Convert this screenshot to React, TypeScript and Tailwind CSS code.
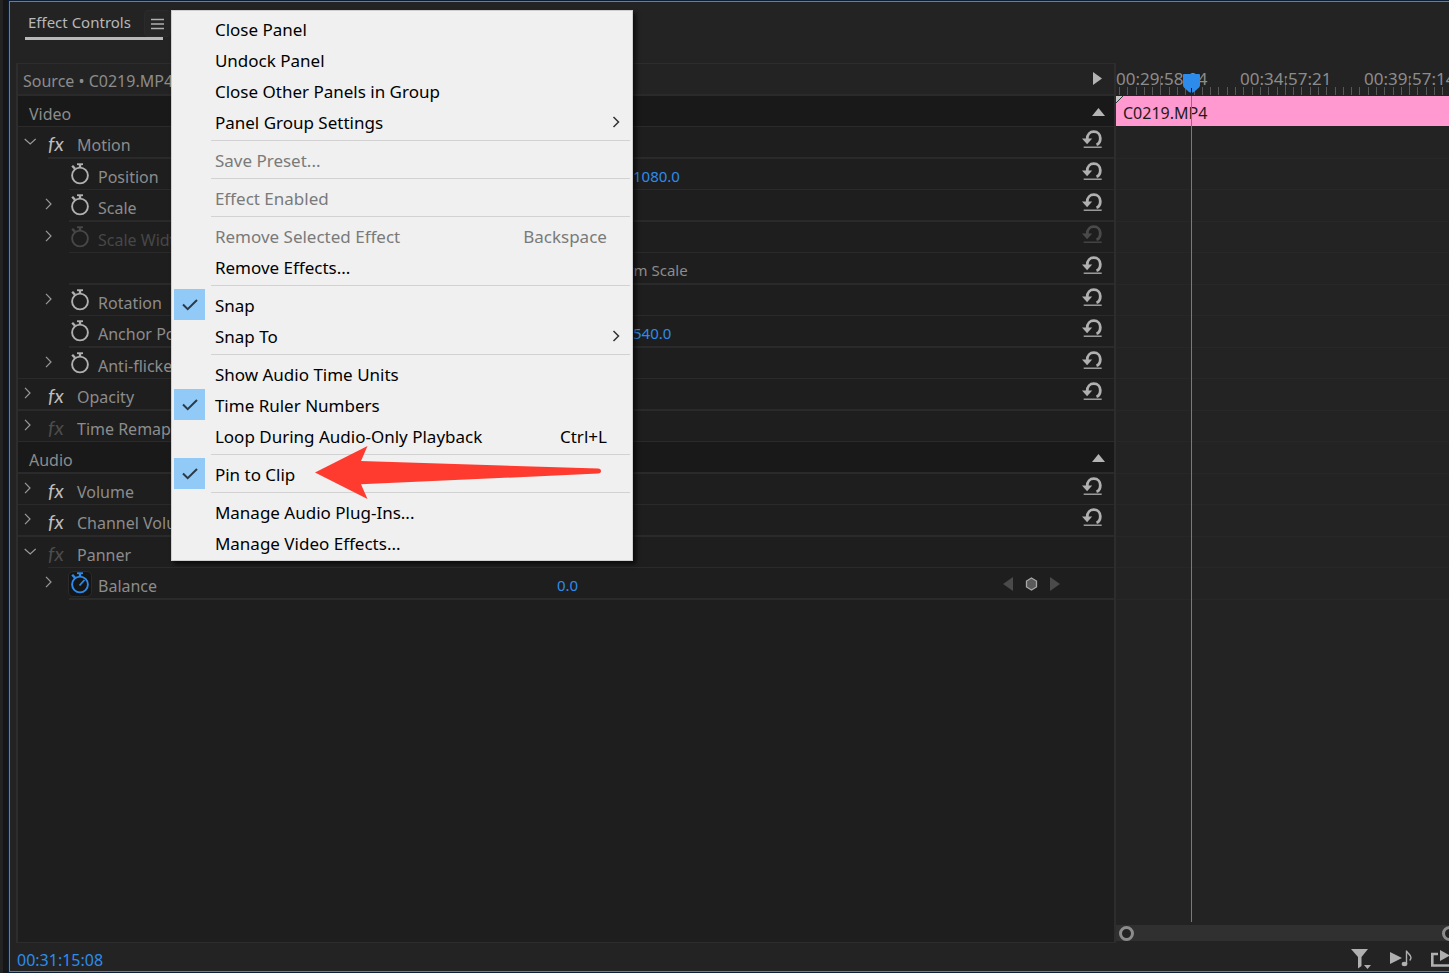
import type { ReactNode } from 'react';

type Row = {
  kind: 'section' | 'effect' | 'property';
  name: string;
  arrow?: 'right' | 'down';
  inset?: boolean;
  dim?: boolean;
  active?: boolean;
  noWatch?: boolean;
  value?: ReactNode;
  action?: 'reset' | 'reset-dim' | 'keys';
};

const rows: Row[] = [
  { kind: 'section', name: 'Video' },
  { kind: 'effect', name: 'Motion', arrow: 'down', inset: true, action: 'reset' },
  {
    kind: 'property',
    name: 'Position',
    inset: true,
    action: 'reset',
    value: <button className="ml-[76px] text-[#2d8ceb]">1080.0</button>
  },
  { kind: 'property', name: 'Scale', arrow: 'right', inset: true, action: 'reset' },
  { kind: 'property', name: 'Scale Width', arrow: 'right', inset: true, dim: true, action: 'reset-dim' },
  {
    kind: 'property',
    name: '',
    inset: true,
    noWatch: true,
    action: 'reset',
    value: <span className="ml-8">Uniform Scale</span>
  },
  { kind: 'property', name: 'Rotation', arrow: 'right', inset: true, action: 'reset' },
  {
    kind: 'property',
    name: 'Anchor Point',
    inset: true,
    action: 'reset',
    value: <button className="ml-[76px] text-[#2d8ceb]">540.0</button>
  },
  { kind: 'property', name: 'Anti-flicker Filter', arrow: 'right', action: 'reset' },
  { kind: 'effect', name: 'Opacity', arrow: 'right', action: 'reset' },
  { kind: 'effect', name: 'Time Remapping', arrow: 'right', dim: true },
  { kind: 'section', name: 'Audio' },
  { kind: 'effect', name: 'Volume', arrow: 'right', action: 'reset' },
  { kind: 'effect', name: 'Channel Volume', arrow: 'right', action: 'reset' },
  { kind: 'effect', name: 'Panner', arrow: 'down', inset: true, dim: true },
  {
    kind: 'property',
    name: 'Balance',
    arrow: 'right',
    inset: true,
    active: true,
    action: 'keys',
    value: <button className="text-[#2d8ceb]">0.0</button>
  }
];

type MenuEntry = {
  label: string;
  shortcut?: string;
  checked?: boolean;
  disabled?: boolean;
  submenu?: boolean;
};

const menuGroups: MenuEntry[][] = [
  [
    { label: 'Close Panel' },
    { label: 'Undock Panel' },
    { label: 'Close Other Panels in Group' },
    { label: 'Panel Group Settings', submenu: true }
  ],
  [{ label: 'Save Preset...', disabled: true }],
  [{ label: 'Effect Enabled', disabled: true }],
  [
    { label: 'Remove Selected Effect', shortcut: 'Backspace', disabled: true },
    { label: 'Remove Effects...' }
  ],
  [
    { label: 'Snap', checked: true },
    { label: 'Snap To', submenu: true }
  ],
  [
    { label: 'Show Audio Time Units' },
    { label: 'Time Ruler Numbers', checked: true },
    { label: 'Loop During Audio-Only Playback', shortcut: 'Ctrl+L' }
  ],
  [{ label: 'Pin to Clip', checked: true }],
  [{ label: 'Manage Audio Plug-Ins...' }, { label: 'Manage Video Effects...' }]
];

const timecodes = ['00:29:58:04', '00:34:57:21', '00:39:57:14'];

function Twirl({ direction }: { direction: 'right' | 'down' }) {
  return (
    <svg width="12" height="12" viewBox="0 0 12 12" fill="none" stroke="#9a9a9a" strokeWidth="1.2">
      {direction === 'right' ? <path d="M1 .8 6 6 1 11.2" /> : <path d="M.7 4 6.2 9 11.7 4" />}
    </svg>
  );
}

function Stopwatch({ active }: { active?: boolean }) {
  return (
    <svg width="22" height="24" viewBox="0 0 22 24" fill="none" stroke="currentColor">
      <circle cx="11" cy="12.5" r="7.9" strokeWidth="1.9" />
      <path d="M8 1.2h6" strokeWidth="1.8" />
      <path d="M11 1v4" strokeWidth="2.4" />
      <path d="M3.2 2.8 6 5.8" strokeWidth="2.4" />
      {active && <path d="M10.5 13.5 15.5 8" strokeWidth="1.8" />}
    </svg>
  );
}

function ResetIcon() {
  return (
    <svg width="20" height="19" viewBox="0 0 20 19">
      <path d="M0 8.4h10.2L5.1 14.2z" fill="currentColor" />
      <path
        d="M5.2 9C5.2 4.4 8 1.7 11.8 1.7c4 0 6.5 3 6.5 6.6 0 3-1.3 5.6-3.8 6.5"
        fill="none"
        stroke="currentColor"
        strokeWidth="2.8"
      />
      <path d="M1.7 17.2h18" stroke="currentColor" strokeWidth="1.3" />
    </svg>
  );
}

function KeyframeNav() {
  return (
    <div className="mr-[54px] flex items-center gap-3 pt-[9px]">
      <button aria-label="Previous keyframe">
        <svg width="10" height="14" viewBox="0 0 10 14">
          <path d="M10 0v14L0 7z" fill="#4a4a4a" />
        </svg>
      </button>
      <button aria-label="Add keyframe">
        <svg width="13" height="14" viewBox="0 0 13 14">
          <path d="M6.5 1 11.5 4v6l-5 3-5-3V4z" fill="#5a5a5a" stroke="#a8a8a8" strokeWidth="1.3" />
        </svg>
      </button>
      <button aria-label="Next keyframe">
        <svg width="10" height="14" viewBox="0 0 10 14">
          <path d="M0 0v14l10-7z" fill="#4a4a4a" />
        </svg>
      </button>
    </div>
  );
}

function EffectRow({ row, thick }: { row: Row; thick: boolean }) {
  const line = thick ? 'border-b-2 border-[#2a2a2a]' : 'border-b border-[#2a2a2a]';
  const height = thick ? 'h-8' : 'h-[31px]';

  if (row.kind === 'section') {
    return (
      <div className={`flex items-start bg-[#191919] ${height} ${line}`}>
        <span className="flex-1 pt-2 pl-[11px] text-base leading-5">{row.name}</span>
        <button className="mr-[9px] pt-3" aria-label={`Collapse ${row.name}`}>
          <svg width="13" height="8" viewBox="0 0 13 8">
            <path d="M6.5 0 13 8H0z" fill="#b4b4b4" />
          </svg>
        </button>
      </div>
    );
  }

  const isEffect = row.kind === 'effect';
  return (
    <div className={`flex ${height} ${row.inset ? '' : line}`}>
      <div className={`shrink-0 pt-2 ${isEffect ? 'w-[30px] pl-1.5' : 'w-[51px] pl-[27px]'}`}>
        {row.arrow && (
          <button className="block" aria-label={`Toggle ${row.name}`}>
            <Twirl direction={row.arrow} />
          </button>
        )}
      </div>
      <div className={`flex min-w-0 flex-1 items-start ${row.inset ? line : ''}`}>
        {isEffect ? (
          <div className="flex flex-1">
            <span
              className={`w-[29px] pt-1.5 font-[Lato,sans-serif] text-xl leading-5 italic ${
                row.dim ? 'text-[#4c4c4c]' : 'text-[#bdbdbd]'
              }`}
            >
              fx
            </span>
            <span className="pt-2 text-base leading-5">{row.name}</span>
          </div>
        ) : (
          <div className={`flex w-[488px] shrink-0 ${row.dim ? 'text-[#474747]' : ''}`}>
            {!row.noWatch && (
              <button
                aria-label={`Animate ${row.name}`}
                className={
                  row.active
                    ? 'mt-1 h-6 rounded-sm bg-[#151515] text-[#2d8ceb] outline outline-[#2a2a2a]'
                    : row.dim
                      ? 'mt-1 h-6'
                      : 'mt-1 h-6 text-[#b0b0b0]'
                }
              >
                <Stopwatch active={row.active} />
              </button>
            )}
            <span className="pt-2 pl-[7px] text-base leading-5">{row.name}</span>
          </div>
        )}
        {!isEffect && <div className="flex flex-1 pt-[7px] leading-5">{row.value}</div>}
        {row.action === 'keys' && <KeyframeNav />}
        {(row.action === 'reset' || row.action === 'reset-dim') && (
          <button
            aria-label={`Reset ${row.name}`}
            className={`mt-[3px] mr-3 ${row.action === 'reset' ? 'text-[#b0b0b0]' : 'text-[#4a4a4a]'}`}
          >
            <ResetIcon />
          </button>
        )}
      </div>
    </div>
  );
}

function PanelMenu() {
  return (
    <div
      role="menu"
      className="absolute top-0 left-full z-20 w-[462px] border border-[#cfcfcf] bg-[#f0f0f0] p-0.5 font-['Noto_Sans',sans-serif] text-[17px] text-black shadow-[3px_3px_4px_rgba(0,0,0,0.6)]"
    >
      {menuGroups.map((group, index) => (
        <div key={index}>
          {index > 0 && <div className="my-[3px] ml-[37px] h-px bg-[#d2d2d2]" />}
          {group.map((entry) => (
            <button
              key={entry.label}
              role={entry.checked ? 'menuitemcheckbox' : 'menuitem'}
              aria-checked={entry.checked}
              disabled={entry.disabled}
              className="flex h-[31px] w-full items-center text-left disabled:text-[#7a7a7a]"
            >
              <span
                className={`mr-2.5 flex h-[31px] w-[31px] items-center justify-center ${
                  entry.checked ? 'bg-[#91c9f7]' : ''
                }`}
              >
                {entry.checked && (
                  <svg width="17" height="12" viewBox="0 0 17 12" fill="none">
                    <path d="M2 5.5 6.7 10.2 16 1" stroke="#2b3a48" strokeWidth="2" />
                  </svg>
                )}
              </span>
              <span className="flex-1 pt-0.5">{entry.label}</span>
              {entry.shortcut && <span className="pt-0.5 pr-[23px]">{entry.shortcut}</span>}
              {entry.submenu && (
                <svg className="mr-2.5" width="8" height="12" viewBox="0 0 8 12" fill="none">
                  <path d="M1.5 1 6.5 6l-5 5" stroke="#333" strokeWidth="1.5" />
                </svg>
              )}
            </button>
          ))}
        </div>
      ))}
      {/* Arrow pointing at "Pin to Clip" */}
      <svg
        className="pointer-events-none absolute top-[435px] left-[142px]"
        width="288"
        height="54"
        viewBox="0 0 288 54"
      >
        <path
          d="M1 26.5 53.5 0 47 15 284 22.5q3 .2 3 2.5t-3 2.6L47 38.3 53.5 53z"
          fill="#ff3b30"
        />
      </svg>
    </div>
  );
}

function Timeline() {
  return (
    <div className="relative flex w-[333px] shrink-0 flex-col overflow-hidden">
      <div className="relative h-[33px] text-[17px] leading-5">
        <svg className="absolute inset-0" width="333" height="33">
          {Array.from({ length: 41 }, (_, i) => {
            const x = Math.round(3 + i * 8.29) + 0.5;
            return (
              <line key={i} x1={x} x2={x} y1={i % 15 === 5 ? 15 : 24} y2="32" stroke="#575757" />
            );
          })}
        </svg>
        <div className="relative flex pt-1.5">
          {timecodes.map((time) => (
            <span key={time} className="w-[124px] shrink-0">
              {time}
            </span>
          ))}
        </div>
      </div>
      <div className="relative h-[30px] bg-[#ff99cf] pt-[7px] pl-[7px] text-base leading-5 text-[#1c1c1c]">
        C0219.MP4
        <svg className="absolute top-0 left-0" width="7" height="7">
          <path d="M0 0h7L0 7z" fill="#c4c4c4" />
          <path d="M7 0 0 7" stroke="#333" />
        </svg>
      </div>
      <div className="mt-px flex-1">
        {rows.slice(1).map((row, index) => (
          <div
            key={index}
            className={
              index % 2 === 0 ? 'h-8 border-b border-[#272727]' : 'h-[31px] border-b border-[#272727]'
            }
          />
        ))}
      </div>
      <div className="mb-0.5 flex h-4 items-center justify-between bg-[#303030] pl-[3px]">
        <button className="size-[15px] rounded-full border-3 border-[#8c8c8c] bg-[#232323]" aria-label="Zoom start" />
        <button
          className="-mr-2 size-[15px] rounded-full border-3 border-[#8c8c8c] bg-[#232323]"
          aria-label="Zoom end"
        />
      </div>
      {/* Playhead */}
      <div className="absolute top-[11px] bottom-[21px] left-[66px] flex w-[19px] flex-col items-center">
        <svg className="shrink-0" width="19" height="19" viewBox="0 0 19 19">
          <path
            d="M2 0h15q1 0 1 1v10q0 1.5-1 2.5l-5 4.5q-2.5 1.5-5 0l-5-4.5q-1-1-1-2.5V1q0-1 1-1z"
            fill="#2d8ceb"
          />
          <path d="M9.5 14v5" stroke="#111" />
        </svg>
        <div className="mt-[3px] w-px flex-1 bg-[#2d8ceb]" />
      </div>
    </div>
  );
}

export default function App() {
  return (
    <div className="flex min-h-screen overflow-hidden bg-[#161616] font-['Noto_Sans',sans-serif] text-[15px] text-[#8c8c8c]">
      <div className="w-[3px] bg-[#232323]" />
      <main className="mt-px mb-px ml-1.5 flex min-w-0 flex-1 flex-col border-y border-l border-[#2d8ceb] bg-[#232323] outline outline-[#0b2038]">
        <header className="flex h-[61px] items-start pt-2 pl-[15px]">
          <div className="relative flex">
            <h1 className="h-[30px] pt-0.5 pr-[13px] pl-[3px] leading-5 text-[#b8b8b8]">Effect Controls</h1>
            <button
              className="h-[27px] rounded-sm border border-[#2a2a2a] bg-[#262626] px-1.5"
              aria-label="Panel menu"
            >
              <svg width="13" height="12" viewBox="0 0 13 12" stroke="#b0b0b0" strokeWidth="1.4">
                <path d="M0 1.5h13M0 6h13M0 10.5h13" />
              </svg>
            </button>
            <div className="absolute top-[27px] left-0 h-[3px] w-[138px] bg-[#b8b8b8]" />
            <PanelMenu />
          </div>
        </header>

        <div className="ml-1.5 flex flex-1">
          <section className="min-w-0 flex-1 border-t border-r-2 border-b border-l-2 border-[#2d2d2d] bg-[#1e1e1e]">
            <div className="flex h-8 items-start border-b-2 border-[#2a2a2a] bg-[#232323]">
              <span className="flex-1 pt-[7px] pl-[5px] text-base leading-5">Source • C0219.MP4</span>
              <button className="mr-3 pt-2" aria-label="Show timeline">
                <svg width="9" height="13" viewBox="0 0 9 13">
                  <path d="M0 0v13l9-6.5z" fill="#b4b4b4" />
                </svg>
              </button>
            </div>
            {rows.map((row, index) => (
              <EffectRow key={index} row={row} thick={index % 2 === 1} />
            ))}
          </section>
          <Timeline />
        </div>

        <footer className="flex h-7 items-center overflow-hidden pl-[7px]">
          <span className="flex-1 pt-1.5 text-base leading-5 text-[#2d8ceb]">00:31:15:08</span>
          <div className="flex shrink-0 items-center gap-[19px] pt-0.5 text-[#b0b0b0]">
            <button aria-label="Filter properties">
              <svg width="20" height="21" viewBox="0 0 20 21" fill="currentColor">
                <path d="M0 1h17l-6.500 8v9l-3.500 2.500V9zM13 17h7l-3.500 4z" />
              </svg>
            </button>
            <button aria-label="Play audio">
              <svg width="22" height="18" viewBox="0 0 22 18">
                <path d="M0 3v12l12-6z" fill="currentColor" />
                <ellipse cx="14.5" cy="15" rx="2.8" ry="2.2" fill="currentColor" />
                <path
                  d="M16.5 15V1.5c.5 3 4.500 4 4.500 7 0 1-.3 2-1.300 3"
                  fill="none"
                  stroke="currentColor"
                  strokeWidth="1.4"
                />
              </svg>
            </button>
            <button aria-label="Export">
              <svg width="18" height="19" viewBox="0 0 18 19">
                <path d="M7 5H1.300v11.500H18" fill="none" stroke="currentColor" strokeWidth="2.6" />
                <path d="M9 1v11l10-5.500z" fill="currentColor" />
              </svg>
            </button>
          </div>
        </footer>
      </main>
    </div>
  );
}
